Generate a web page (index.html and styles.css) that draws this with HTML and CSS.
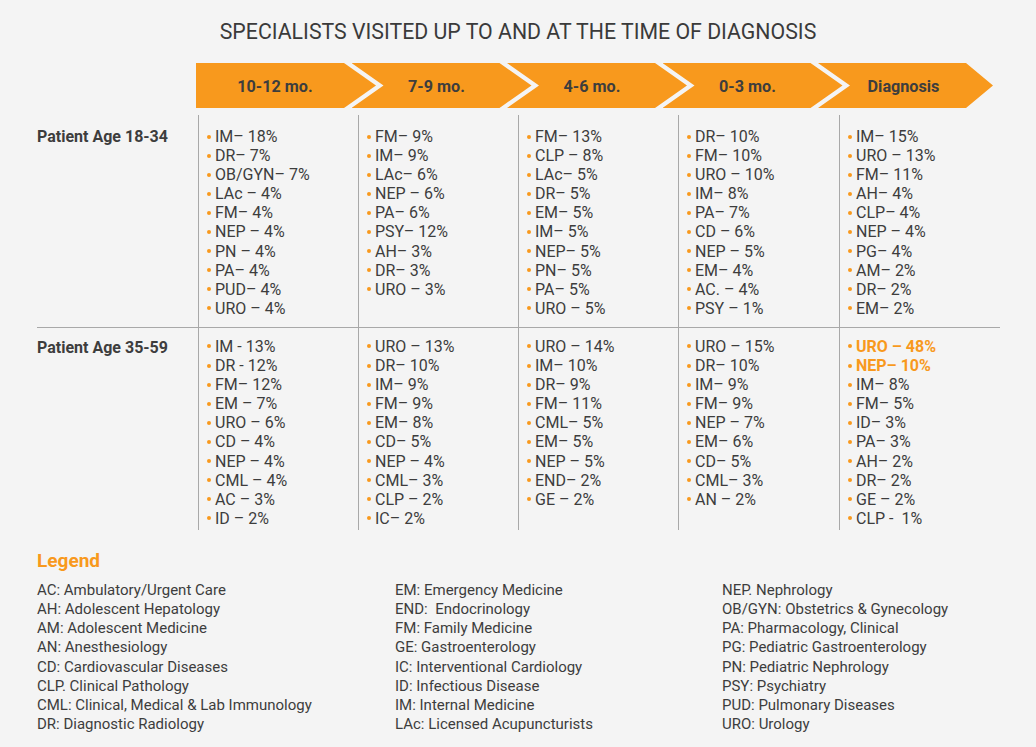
FILE: index.html
```html
<!DOCTYPE html>
<html>
<head>
<meta charset="utf-8">
<link rel="stylesheet" href="styles.css">
</head>
<body>
<div class="page">
  <h1 class="title">SPECIALISTS VISITED UP TO AND AT THE TIME OF DIAGNOSIS</h1>
  <div class="timeline">
    <div class="seg first">10-12 mo.</div>
    <div class="seg">7-9 mo.</div>
    <div class="seg">4-6 mo.</div>
    <div class="seg">0-3 mo.</div>
    <div class="seg last">Diagnosis</div>
  </div>
  <div class="grid">
    <div class="label r1">Patient Age 18-34</div>
    <ul class="cell r1">
      <li>IM– 18%</li><li>DR– 7%</li><li>OB/GYN– 7%</li><li>LAc – 4%</li><li>FM– 4%</li><li>NEP – 4%</li><li>PN – 4%</li><li>PA– 4%</li><li>PUD– 4%</li><li>URO – 4%</li>
    </ul>
    <ul class="cell r1">
      <li>FM– 9%</li><li>IM– 9%</li><li>LAc– 6%</li><li>NEP – 6%</li><li>PA– 6%</li><li>PSY– 12%</li><li>AH– 3%</li><li>DR– 3%</li><li>URO – 3%</li>
    </ul>
    <ul class="cell r1">
      <li>FM– 13%</li><li>CLP – 8%</li><li>LAc– 5%</li><li>DR– 5%</li><li>EM– 5%</li><li>IM– 5%</li><li>NEP– 5%</li><li>PN– 5%</li><li>PA– 5%</li><li>URO – 5%</li>
    </ul>
    <ul class="cell r1">
      <li>DR– 10%</li><li>FM– 10%</li><li>URO – 10%</li><li>IM– 8%</li><li>PA– 7%</li><li>CD – 6%</li><li>NEP – 5%</li><li>EM– 4%</li><li>AC. – 4%</li><li>PSY – 1%</li>
    </ul>
    <ul class="cell r1">
      <li>IM– 15%</li><li>URO – 13%</li><li>FM– 11%</li><li>AH– 4%</li><li>CLP– 4%</li><li>NEP – 4%</li><li>PG– 4%</li><li>AM– 2%</li><li>DR– 2%</li><li>EM– 2%</li>
    </ul>

    <div class="label r2">Patient Age 35-59</div>
    <ul class="cell r2">
      <li>IM - 13%</li><li>DR - 12%</li><li>FM– 12%</li><li>EM – 7%</li><li>URO – 6%</li><li>CD – 4%</li><li>NEP – 4%</li><li>CML – 4%</li><li>AC – 3%</li><li>ID – 2%</li>
    </ul>
    <ul class="cell r2">
      <li>URO – 13%</li><li>DR– 10%</li><li>IM– 9%</li><li>FM– 9%</li><li>EM– 8%</li><li>CD– 5%</li><li>NEP – 4%</li><li>CML– 3%</li><li>CLP – 2%</li><li>IC– 2%</li>
    </ul>
    <ul class="cell r2">
      <li>URO – 14%</li><li>IM– 10%</li><li>DR– 9%</li><li>FM– 11%</li><li>CML– 5%</li><li>EM– 5%</li><li>NEP – 5%</li><li>END– 2%</li><li>GE – 2%</li>
    </ul>
    <ul class="cell r2">
      <li>URO – 15%</li><li>DR– 10%</li><li>IM– 9%</li><li>FM– 9%</li><li>NEP – 7%</li><li>EM– 6%</li><li>CD– 5%</li><li>CML– 3%</li><li>AN – 2%</li>
    </ul>
    <ul class="cell r2">
      <li class="hl">URO – 48%</li><li class="hl">NEP– 10%</li><li>IM– 8%</li><li>FM– 5%</li><li>ID– 3%</li><li>PA– 3%</li><li>AH– 2%</li><li>DR– 2%</li><li>GE – 2%</li><li>CLP -  1%</li>
    </ul>
  </div>

  <h2 class="legend-title">Legend</h2>
  <div class="legend">
    <ul class="lcol c1">
      <li>AC: Ambulatory/Urgent Care</li>
      <li>AH: Adolescent Hepatology</li>
      <li>AM: Adolescent Medicine</li>
      <li>AN: Anesthesiology</li>
      <li>CD: Cardiovascular Diseases</li>
      <li>CLP. Clinical Pathology</li>
      <li>CML: Clinical, Medical &amp; Lab Immunology</li>
      <li>DR: Diagnostic Radiology</li>
    </ul>
    <ul class="lcol c2">
      <li>EM: Emergency Medicine</li>
      <li>END:&nbsp; Endocrinology</li>
      <li>FM: Family Medicine</li>
      <li>GE: Gastroenterology</li>
      <li>IC: Interventional Cardiology</li>
      <li>ID: Infectious Disease</li>
      <li>IM: Internal Medicine</li>
      <li>LAc: Licensed Acupuncturists</li>
    </ul>
    <ul class="lcol c3">
      <li>NEP. Nephrology</li>
      <li>OB/GYN: Obstetrics &amp; Gynecology</li>
      <li>PA: Pharmacology, Clinical</li>
      <li>PG: Pediatric Gastroenterology</li>
      <li>PN: Pediatric Nephrology</li>
      <li>PSY: Psychiatry</li>
      <li>PUD: Pulmonary Diseases</li>
      <li>URO: Urology</li>
    </ul>
  </div>
</div>
</body>
</html>
```

FILE: styles.css
```css
* { box-sizing: border-box; }
html, body {
  margin: 0;
  padding: 0;
  background: #f4f4f4;
}
body {
  font-family: Roboto, "Liberation Sans", sans-serif;
  color: #3d3d3d;
}
.page {
  width: 1036px;
  height: 747px;
  padding: 0 0 0 37px;
  overflow: hidden;
}
.title {
  margin: 0 0 0 -37px;
  padding-top: 19px;
  height: 63px;
  font-size: 21.3px;
  font-weight: 400;
  line-height: 26px;
  text-align: center;
  color: #3a3a3a;
}
.timeline {
  display: flex;
  margin-left: 159px;
  height: 45px;
}
.seg {
  flex: 0 0 180px;
  height: 45px;
  background: #f8991d;
  color: #3d3d3d;
  font-weight: 700;
  font-size: 16.2px;
  display: flex;
  align-items: center;
  justify-content: center;
  padding-right: 10px;
  padding-top: 2px;
  margin-left: -24.5px;
  clip-path: polygon(0 0, 148px 0, 180px 50%, 148px 100%, 0 100%, 32px 50%);
}
.seg.first {
  margin-left: 0;
  padding-right: 22px;
  clip-path: polygon(0 0, 148px 0, 180px 50%, 148px 100%, 0 100%);
}
.seg.last {
  flex-basis: 175px;
  padding-right: 4px;
  clip-path: polygon(0 0, 148px 0, 175px 50%, 148px 100%, 0 100%, 32px 50%);
}
.grid {
  display: grid;
  grid-template-columns: 161px 160px 160px 160px 161px 161px;
  margin-top: 7px;
}
.label {
  font-weight: 700;
  font-size: 16px;
  line-height: 19px;
}
.cell {
  list-style: none;
  margin: 0;
  border-left: 1px solid #a8a8a8;
  padding-left: 8px;
  font-size: 16px;
  line-height: 19.1px;
}
.r1 { padding-top: 12px; padding-bottom: 9px; }
.r2 { padding-top: 9px; padding-bottom: 2px; border-top: 1px solid #a8a8a8; }
.label.r2 { padding-top: 10px; }
.cell li {
  display: flex;
  align-items: center;
  white-space: pre;
}
.cell li::before {
  content: "";
  width: 4px;
  height: 4px;
  border-radius: 50%;
  background: #f8991d;
  margin-right: 4px;
  flex: 0 0 4px;
}
.cell li.hl {
  color: #f8991d;
  font-weight: 700;
}
.legend-title {
  margin: 20px 0 0;
  font-size: 19px;
  font-weight: 700;
  line-height: 22px;
  color: #f8991d;
}
.legend {
  display: flex;
  margin-top: 9px;
}
.lcol {
  list-style: none;
  margin: 0;
  padding: 0;
  font-size: 15px;
  line-height: 19.2px;
  color: #3d3d3d;
}
.c1 { width: 358px; }
.c2 { width: 327px; }
```
